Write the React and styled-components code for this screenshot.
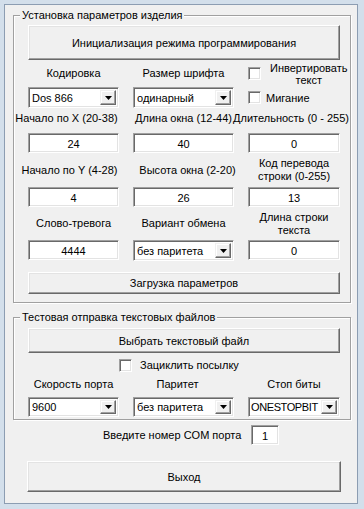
import React from "react";
import styled, { createGlobalStyle } from "styled-components";

const GlobalStyle = createGlobalStyle`
  html, body {
    margin: 0;
    padding: 0;
  }
  body {
    background: #d3dfeb;
    font-family: "Liberation Sans", Arial, sans-serif;
    font-size: 11px;
    color: #000;
  }
`;

const Frame = styled.div`
  width: 364px;
  height: 509px;
  box-sizing: border-box;
  padding: 4px 6px 5px 4px;
  background: #d3dfeb;
`;

const Client = styled.div`
  box-sizing: border-box;
  height: 100%;
  border: 1px solid #8c9db2;
  background: #f0f0f0;
  padding: 3px 6px 0 8px;
  display: flex;
  flex-direction: column;
`;

const Group = styled.fieldset`
  margin: ${p => p.$mt || 0}px 0 0 0;
  padding: 0;
  min-width: 0;
  border: 1px solid #a0a0a0;
  box-shadow: inset 1px 1px 0 #fff, 1px 1px 0 #fff;
`;

const Legend = styled.legend`
  margin-left: 6px;
  padding: 0 2px;
  line-height: 14px;
  background: #f0f0f0;
`;

const GroupBody = styled.div`
  padding: ${p => p.$pad};
  display: flex;
  flex-direction: column;
`;

const Button = styled.button`
  box-sizing: border-box;
  width: 100%;
  height: ${p => p.$h}px;
  margin: ${p => p.$mt || 0}px 0 0 0;
  padding: 0;
  font: inherit;
  color: #000;
  background: #f0f0f0;
  border: 1px solid;
  border-color: #fff #696969 #696969 #fff;
  box-shadow: inset -1px -1px 0 #a0a0a0, inset 1px 1px 0 #e3e3e3;
`;

const Row = styled.div`
  display: grid;
  grid-template-columns: 91px 101px 92px;
  column-gap: 14px;
`;

const Cell = styled.div`
  display: flex;
  flex-direction: column;
  min-width: 0;
`;

const Caption = styled.div`
  box-sizing: border-box;
  height: ${p => p.$h}px;
  padding-bottom: ${p => p.$pb || 0}px;
  display: flex;
  align-items: center;
  justify-content: center;
  text-align: center;
  white-space: nowrap;
  line-height: 13px;
  transform: translateX(${p => p.$shift || 0}px);
`;

const Sunken = styled.div`
  box-sizing: border-box;
  height: ${p => p.$h || 20}px;
  width: ${p => (p.$w ? `${p.$w}px` : "100%")};
  background: #fff;
  border: 1px solid;
  border-color: #a0a0a0 #fff #fff #a0a0a0;
  box-shadow: inset 1px 1px 0 #696969, inset -1px -1px 0 #e3e3e3;
`;

const Input = styled(Sunken)`
  display: flex;
  align-items: center;
  justify-content: center;
  padding-top: 1px;
`;

const Combo = styled(Sunken)`
  display: flex;
  align-items: center;
  padding: 2px 2px 2px ${p => p.$pl}px;
`;

const ComboText = styled.span`
  flex: 1;
  min-width: 0;
  white-space: nowrap;
  overflow: hidden;
  letter-spacing: ${p => p.$ls || 0}px;
`;

const DropButton = styled.span`
  box-sizing: border-box;
  flex: none;
  width: 16px;
  height: 100%;
  display: flex;
  align-items: center;
  justify-content: center;
  background: #f0f0f0;
  border: 1px solid;
  border-color: #f0f0f0 #696969 #696969 #f0f0f0;
  box-shadow: inset -1px -1px 0 #a0a0a0, inset 1px 1px 0 #fff;
`;

const CheckLine = styled.div`
  display: flex;
  align-items: center;
  height: ${p => p.$h || 14}px;
  margin-top: ${p => p.$mt || 0}px;
  padding-left: ${p => p.$pl || 0}px;
  white-space: nowrap;
`;

const Box = styled.span`
  box-sizing: border-box;
  flex: none;
  width: 13px;
  height: 13px;
  background: #fff;
  border: 1px solid;
  border-color: #a0a0a0 #fff #fff #a0a0a0;
  box-shadow: inset 1px 1px 0 #696969, inset -1px -1px 0 #e3e3e3;
  margin-right: ${p => p.$gap || 6}px;
`;

const CheckText = styled.span`
  text-align: center;
  line-height: ${p => p.$lh || 14}px;
`;

const ComRow = styled.div`
  display: flex;
  align-items: center;
  margin-top: 5px;
  padding-left: 90px;
`;

const ComLabel = styled.span`
  width: 148px;
  white-space: nowrap;
`;

function Arrow() {
  return (
    <svg width="7" height="4" viewBox="0 0 7 4">
      <path d="M0 0h7L3.5 4z" fill="#000" />
    </svg>
  );
}

function Select({ value, h = 21, pl = 3, ls }) {
  return (
    <Combo $h={h} $pl={pl}>
      <ComboText $ls={ls}>{value}</ComboText>
      <DropButton>
        <Arrow />
      </DropButton>
    </Combo>
  );
}

function Field({ label, h, pb, shift, children }) {
  return (
    <Cell>
      <Caption $h={h} $pb={pb} $shift={shift}>
        <span>{label}</span>
      </Caption>
      {children}
    </Cell>
  );
}

export default function App() {
  return (
    <>
      <GlobalStyle />
      <Frame>
        <Client>
          <Group>
            <Legend>Установка параметров изделия</Legend>
            <GroupBody $pad="3px 10px 8px 14px">
              <Button $h={35}>Инициализация режима программирования</Button>

              <Row>
                <Field label="Кодировка" h={27}>
                  <Select value="Dos 866" />
                </Field>
                <Field label="Размер шрифта" h={27}>
                  <Select value="одинарный" />
                </Field>
                <Cell>
                  <CheckLine $h={27}>
                    <Box $gap={9} />
                    <CheckText $lh={12}>
                      Инвертировать
                      <br />
                      текст
                    </CheckText>
                  </CheckLine>
                  <CheckLine $h={21}>
                    <Box $gap={5} />
                    <span>Мигание</span>
                  </CheckLine>
                </Cell>
              </Row>

              <Row>
                <Field label="Начало по X (20-38)" h={25} pb={5} shift={-7}>
                  <Input>24</Input>
                </Field>
                <Field label="Длина окна (12-44)" h={25} pb={5}>
                  <Input>40</Input>
                </Field>
                <Field label="Длительность (0 - 255)" h={25} pb={5} shift={-3}>
                  <Input>0</Input>
                </Field>
              </Row>

              <Row>
                <Field label="Начало по Y (4-28)" h={34} shift={-4}>
                  <Input>4</Input>
                </Field>
                <Field label="Высота окна (2-20)" h={34} shift={4}>
                  <Input>26</Input>
                </Field>
                <Field
                  label={
                    <>
                      Код перевода
                      <br />
                      строки (0-255)
                    </>
                  }
                  h={34}
                >
                  <Input>13</Input>
                </Field>
              </Row>

              <Row>
                <Field label="Слово-тревога" h={33}>
                  <Input>4444</Input>
                </Field>
                <Field label="Вариант обмена" h={33}>
                  <Select value="без паритета" />
                </Field>
                <Field
                  label={
                    <>
                      Длина строки
                      <br />
                      текста
                    </>
                  }
                  h={33}
                >
                  <Input>0</Input>
                </Field>
              </Row>

              <Button $h={22} $mt={11}>
                Загрузка параметров
              </Button>
            </GroupBody>
          </Group>

          <Group $mt={7}>
            <Legend>Тестовая отправка текстовых файлов</Legend>
            <GroupBody $pad="4px 10px 2px 14px">
              <Button $h={25}>Выбрать текстовый файл</Button>
              <CheckLine $h={14} $pl={91} $mt={5}>
                <Box $gap={8} />
                <span>Зациклить посылку</span>
              </CheckLine>
              <Row>
                <Field label="Скорость порта" h={25}>
                  <Select value="9600" h={20} />
                </Field>
                <Field label="Паритет" h={25} shift={-6}>
                  <Select value="без паритета" h={20} />
                </Field>
                <Field label="Стоп биты" h={25}>
                  <Select value="ONESTOPBIT" h={20} pl={2} ls={-0.4} />
                </Field>
              </Row>
            </GroupBody>
          </Group>

          <ComRow>
            <ComLabel>Введите номер COM порта</ComLabel>
            <Input $w={28}>1</Input>
          </ComRow>

          <GroupBody $pad="0 10px 0 14px">
            <Button $h={31} $mt={16}>
              Выход
            </Button>
          </GroupBody>
        </Client>
      </Frame>
    </>
  );
}
